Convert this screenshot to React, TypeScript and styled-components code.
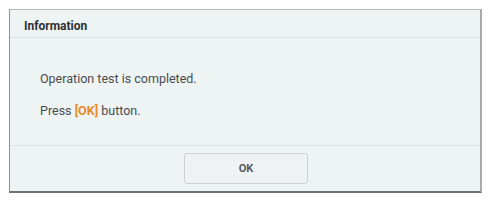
import styled, { createGlobalStyle } from "styled-components";

const Global = createGlobalStyle`
  body {
    margin: 0;
    background: #ffffff;
    font-family: Roboto, "Liberation Sans", sans-serif;
  }
`

const Page = styled.div`
  width: 492px;
  height: 204px;
  padding: 9px 0 0 9px;
  box-sizing: border-box;
`

const Dialog = styled.div`
  width: 473px;
  height: 184px;
  box-sizing: border-box;
  background: #eef3f4;
  border-top: 1px solid #b4b6b7;
  border-left: 1px solid #8e9092;
  border-right: 2px solid #a9abad;
  border-bottom: 2px solid #6f7173;
  display: flex;
  flex-direction: column;
`

const Header = styled.div`
  height: 28px;
  box-sizing: border-box;
  padding: 4px 0 0 14px;
  display: flex;
  align-items: center;
  font-size: 12px;
  font-weight: 700;
  color: #2e3133;
  border-bottom: 1px solid #dbe1e3;
`

const Body = styled.div`
  flex: 1;
  padding: 34px 30px 0;
  display: flex;
  flex-direction: column;
  gap: 18px;
  font-size: 12.5px;
  color: #4a4d50;
  border-bottom: 1px solid #dde3e5;
`

const Line = styled.div`
  line-height: 14px;
`

const Accent = styled.span`
  color: #e8892c;
  font-weight: 700;
`

const Footer = styled.div`
  height: 45px;
  display: flex;
  justify-content: center;
  align-items: center;
`

const Button = styled.button`
  width: 124px;
  height: 31px;
  margin-left: 2px;
  background: #eff2f3;
  border: 1px solid #cdd1d3;
  border-radius: 3px;
  font-family: Roboto, "Liberation Sans", sans-serif;
  font-size: 11px;
  font-weight: 700;
  color: #55585b;
`

export default function App() {
    return (
        <>
            <Global/>
            <Page>
                <Dialog>
                    <Header>Information</Header>
                    <Body>
                        <Line>Operation test is completed.</Line>
                        <Line>Press <Accent>[OK]</Accent> button.</Line>
                    </Body>
                    <Footer>
                        <Button type="button">OK</Button>
                    </Footer>
                </Dialog>
            </Page>
        </>
    )
}
